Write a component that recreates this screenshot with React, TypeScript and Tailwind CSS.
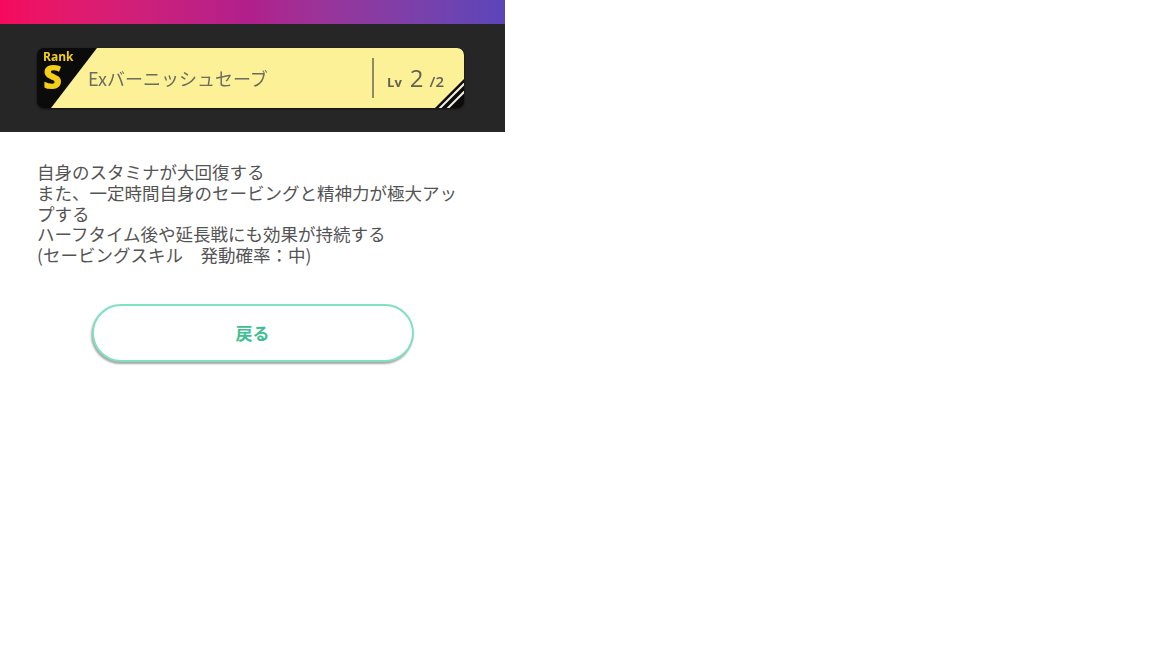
import React from 'react';

const jp = { fontFamily: '"Noto Sans CJK JP", "Noto Sans", sans-serif' };
const latin = { fontFamily: '"Open Sans", "Noto Sans", sans-serif' };

const CardShape: React.FC = () => (
  <svg className="absolute inset-0" width="427" height="60" viewBox="0 0 427 60">
    <defs>
      <clipPath id="card-clip">
        <rect x="0" y="0" width="427" height="60" rx="7" />
      </clipPath>
    </defs>
    <g clipPath="url(#card-clip)">
      <rect x="0" y="0" width="427" height="60" fill="#0b0b0b" />
      <polygon points="60,0 427,0 427,31 398,60 14,60" fill="#fdf197" />
      <line x1="431" y1="32" x2="401" y2="62" stroke="#f4f1e0" strokeWidth="2" />
      <line x1="437" y1="34" x2="407" y2="64" stroke="#f4f1e0" strokeWidth="2" />
    </g>
  </svg>
);

const App: React.FC = () => {
  const lines = [
    '自身のスタミナが大回復する',
    'また、一定時間自身のセービングと精神力が極大アップする',
    'ハーフタイム後や延長戦にも効果が持続する',
    '(セービングスキル　発動確率：中)',
  ];

  return (
    <div className="w-[505px] bg-white" style={jp}>
      {/* Top gradient */}
      <div className="h-[24px] bg-gradient-to-r from-[#f6085d] via-[#b01f8c] to-[#5a45ba]" />

      {/* Skill card area */}
      <div className="bg-[#262626] px-[37px] py-[24px]">
        <div className="relative h-[60px] w-[427px] drop-shadow-[0_1px_1px_rgba(0,0,0,0.6)]">
          <CardShape />
          <div className="relative flex h-full items-center">
            <div className="flex w-[42px] flex-col items-start self-start pl-[6px] pt-[3px]" style={latin}>
              <span className="text-[12px] font-bold leading-[12px] text-[#f5cf17]">Rank</span>
              <span className="text-[33px] font-extrabold leading-[28px] text-[#f5cf17]">S</span>
            </div>
            <div className="ml-[9px] flex-1 text-[18px] font-normal text-[#6c6c60]">Exバーニッシュセーブ</div>
            <div className="h-[40px] w-[2px] bg-[#8d8a6a]" />
            <div className="ml-[13px] mr-[20px] flex items-baseline text-[#626158]" style={latin}>
              <span className="text-[13px] font-bold">Lv</span>
              <span className="ml-[8px] text-[24px] font-medium">2</span>
              <span className="ml-[6px] text-[15px] font-semibold">/2</span>
            </div>
          </div>
        </div>
      </div>

      {/* Description */}
      <div className="px-[37px] pt-[30px] text-[17.5px] font-normal leading-[20.8px] text-[#545454]">
        {lines.map((l) => (
          <p key={l}>{l}</p>
        ))}
      </div>

      {/* Back button */}
      <div className="flex justify-center pt-[38px] pb-[10px]">
        <button
          type="button"
          className="h-[58px] w-[322px] rounded-full border-2 border-[#7fe0c3] bg-white text-[17px] font-bold text-[#3cc08f] shadow-[-1px_2px_2px_rgba(0,0,0,0.35)]"
        >
          戻る
        </button>
      </div>
    </div>
  );
};

export default App;
